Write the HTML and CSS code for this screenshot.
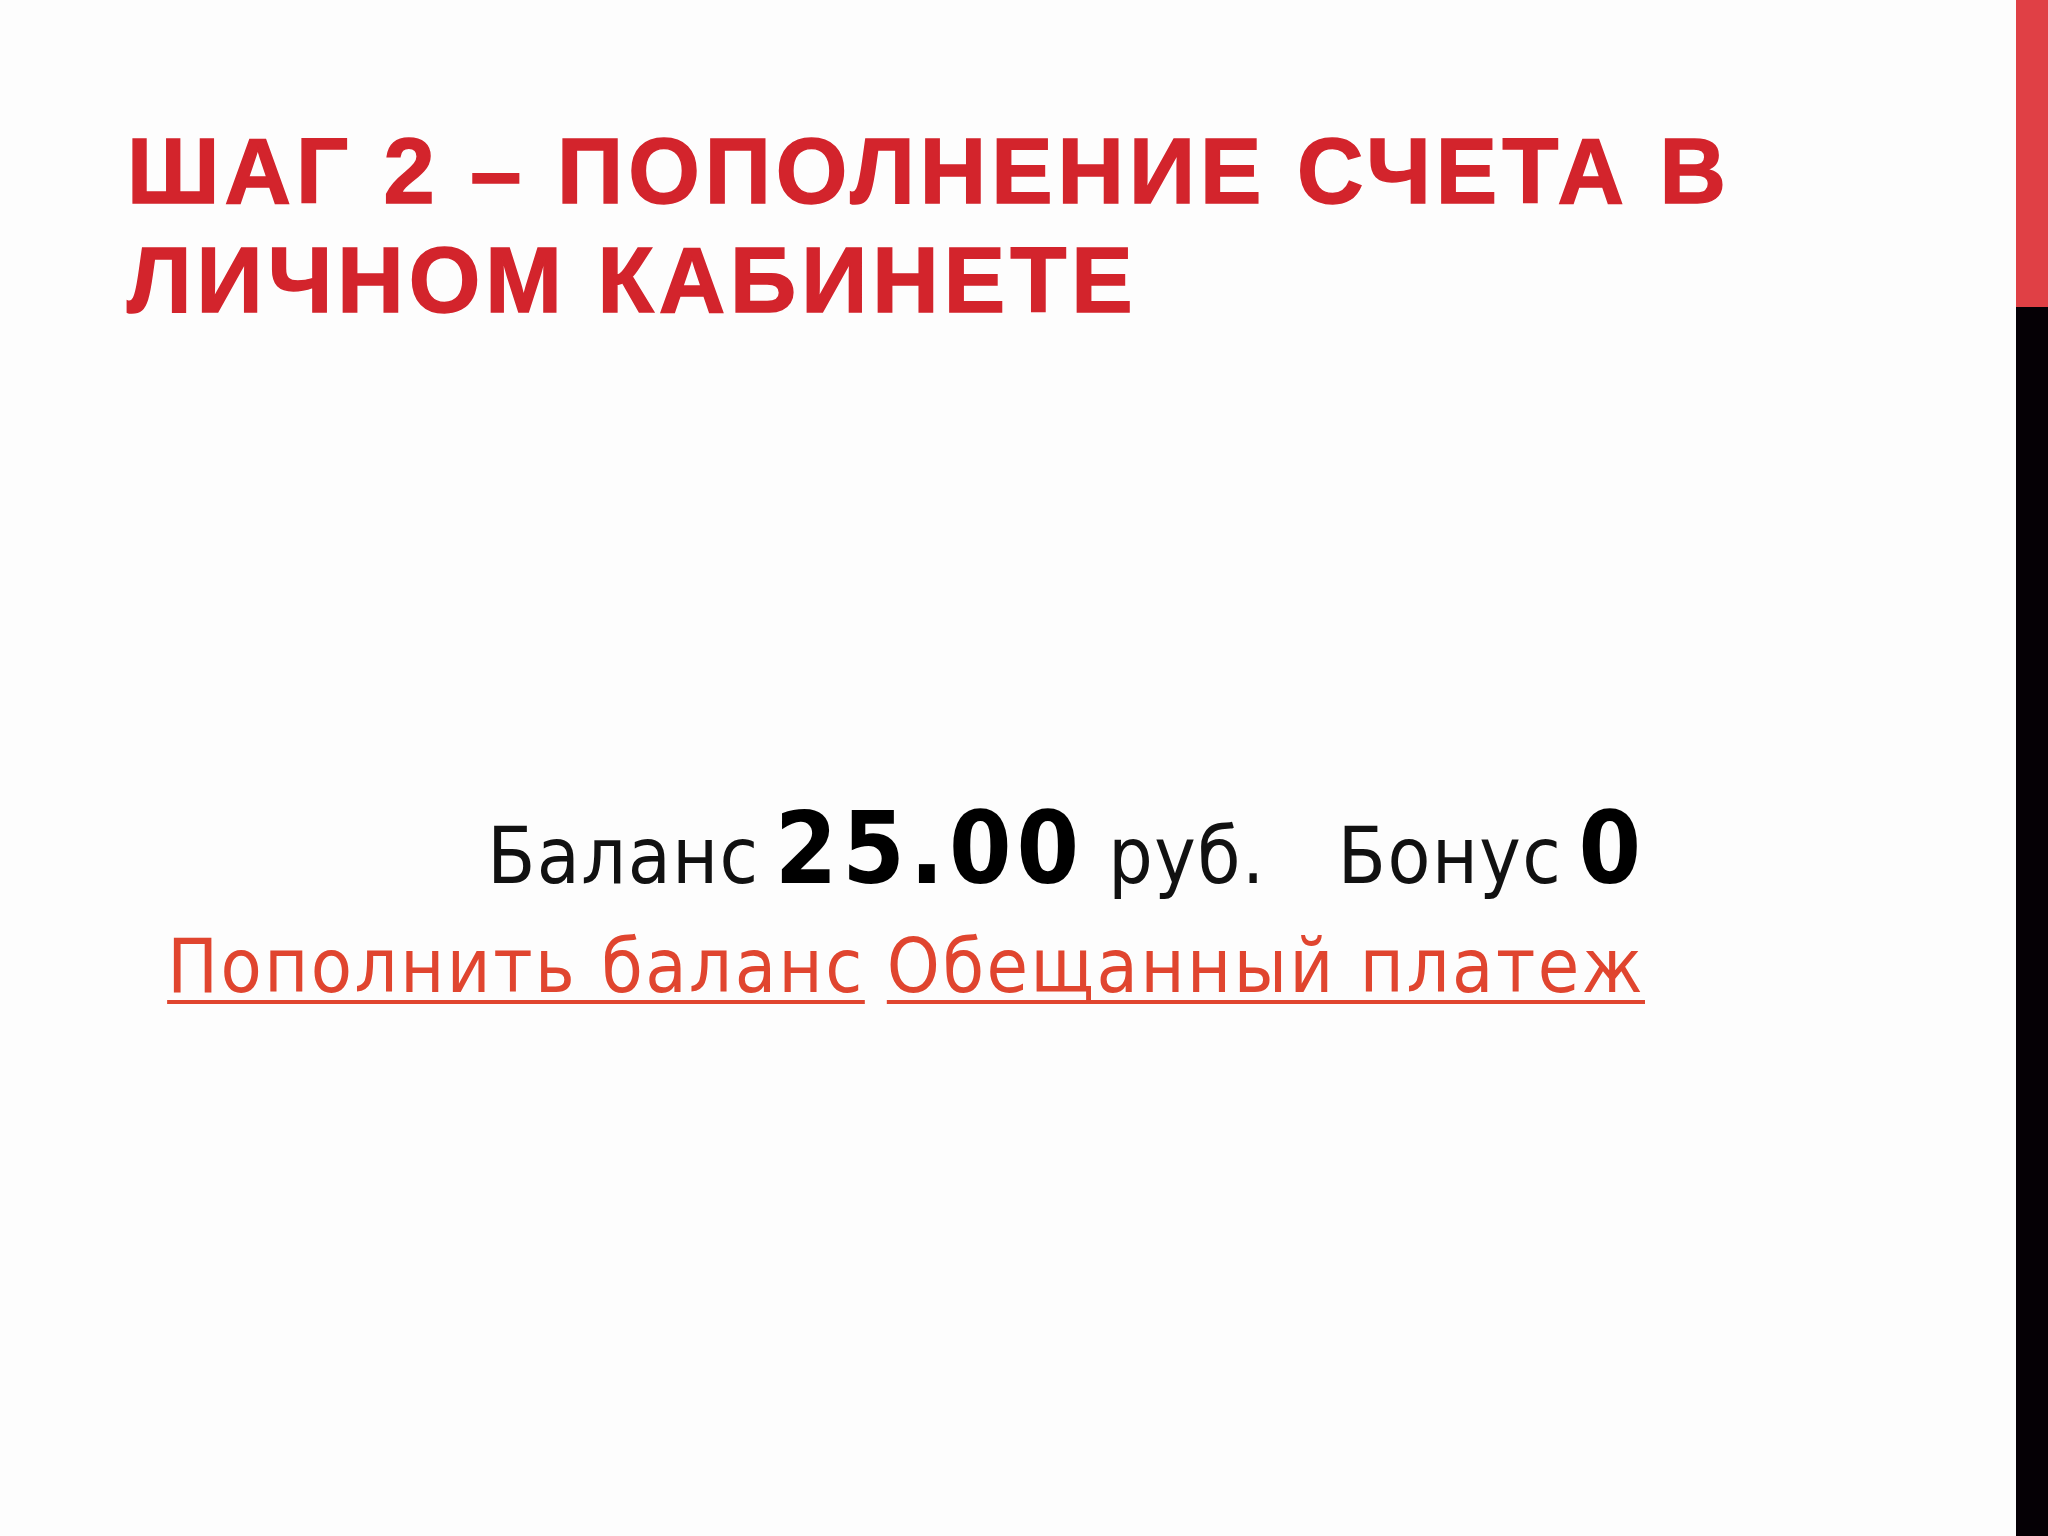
FILE: index.html
```html
<!DOCTYPE html>
<html lang="ru">
<head>
<meta charset="utf-8">
<title>Шаг 2 – пополнение счета в личном кабинете</title>
<link rel="stylesheet" href="styles.css">
</head>
<body>
<div class="slide">
  <main class="content">
    <h1 class="title">Шаг 2 – пополнение счета в личном кабинете</h1>
    <section class="account">
      <div class="balance-row">
        <span class="label">Баланс</span>
        <span class="amount">25.00</span>
        <span class="label currency">руб.</span>
        <span class="label bonus-label">Бонус</span>
        <span class="bonus">0</span>
      </div>
      <div class="links-row">
        <a class="link" href="#">Пополнить баланс</a>
        <a class="link" href="#">Обещанный платеж</a>
      </div>
    </section>
  </main>
  <aside class="side-bar">
    <div class="side-red"></div>
    <div class="side-black"></div>
  </aside>
</div>
</body>
</html>
```
FILE: styles.css
```css
html, body {
  margin: 0;
  padding: 0;
  background: #fdfdfd;
}
.slide {
  display: flex;
  width: 2048px;
  height: 1536px;
  overflow: hidden;
}
.content {
  flex: 1;
  padding-left: 127px;
}
.title {
  margin: 117px 0 0 0;
  width: 1820px;
  font-family: "Liberation Sans", Arial, sans-serif;
  font-weight: 700;
  font-size: 92px;
  line-height: 109px;
  letter-spacing: 5px;
  text-transform: uppercase;
  color: #d3242c;
  -webkit-text-stroke: 1.5px #d3242c;
}
.account {
  margin-top: 459px;
  margin-left: 36px;
  width: 1482px;
  font-family: "DejaVu Sans Condensed", "DejaVu Sans", sans-serif;
}
.balance-row {
  display: flex;
  justify-content: flex-end;
  align-items: baseline;
  color: #111;
  line-height: 110px;
}
.label {
  font-size: 78px;
  letter-spacing: 1.5px;
  white-space: nowrap;
}
.amount, .bonus {
  font-size: 100px;
  font-weight: 700;
  letter-spacing: 5px;
  color: #000;
  white-space: nowrap;
}
.amount {
  margin-left: 15px;
}
.currency {
  margin-left: 24px;
}
.bonus-label {
  margin-left: 72px;
}
.bonus {
  margin-left: 16px;
  margin-right: -1px;
}
.links-row {
  display: flex;
  justify-content: flex-end;
  gap: 22px;
  line-height: 110px;
}
.link {
  flex-shrink: 0;
  white-space: nowrap;
  font-size: 75px;
  letter-spacing: 2.5px;
  color: #e0452f;
  text-decoration: underline;
  text-decoration-thickness: 4px;
  text-underline-offset: 8px;
  text-decoration-skip-ink: none;
}
.side-bar {
  width: 32px;
  display: flex;
  flex-direction: column;
}
.side-red {
  height: 307px;
  background: #e04045;
}
.side-black {
  flex: 1;
  background: #050005;
}
```
